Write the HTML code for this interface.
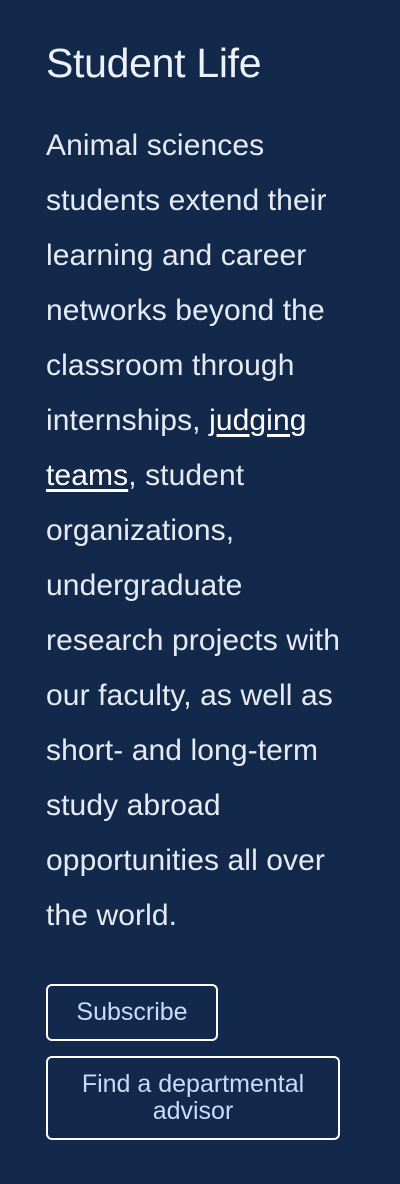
<!DOCTYPE html>
<html><head><meta charset="utf-8"><style>
html,body{margin:0;padding:0;width:400px;height:1184px;background:#13294b;overflow:hidden}
body{font-family:"Liberation Sans",sans-serif;color:#fff;position:relative}
h1{position:absolute;left:46px;top:38px;margin:0;font-weight:normal;font-size:41px;line-height:50px;letter-spacing:-0.3px;color:#eef2f8}
.p{position:absolute;left:46px;top:118px;font-size:30px;line-height:55px;white-space:nowrap;letter-spacing:0.1px;color:#e6ebf3}
.p a{color:#fff;text-decoration:underline;text-underline-offset:4px}
.b{position:absolute;left:46px;border:2px solid #fff;border-radius:6px;box-sizing:border-box;color:#c6dcf8;font-size:25px;text-align:center;display:flex;align-items:center;justify-content:center;line-height:27px}
</style></head><body>
<h1>Student Life</h1>
<div class="p">Animal sciences<br>students extend their<br>learning and career<br>networks beyond the<br>classroom through<br>internships, <a>judging</a><br><a>teams</a>, student<br>organizations,<br>undergraduate<br>research projects with<br>our faculty, as well as<br>short- and long-term<br>study abroad<br>opportunities all over<br>the world.</div>
<div class="b" style="top:984px;width:172px;height:57px">Subscribe</div>
<div class="b" style="top:1056px;width:294px;height:84px">Find a departmental<br>advisor</div>
</body></html>
